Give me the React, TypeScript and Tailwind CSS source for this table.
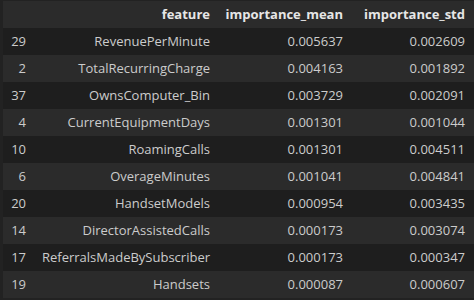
import React from 'react';

const rows: [string, string, string, string][] = [
  ['29', 'RevenuePerMinute', '0.005637', '0.002609'],
  ['2', 'TotalRecurringCharge', '0.004163', '0.001892'],
  ['37', 'OwnsComputer_Bin', '0.003729', '0.002091'],
  ['4', 'CurrentEquipmentDays', '0.001301', '0.001044'],
  ['10', 'RoamingCalls', '0.001301', '0.004511'],
  ['6', 'OverageMinutes', '0.001041', '0.004841'],
  ['20', 'HandsetModels', '0.000954', '0.003435'],
  ['14', 'DirectorAssistedCalls', '0.000173', '0.003074'],
  ['17', 'ReferralsMadeBySubscriber', '0.000173', '0.000347'],
  ['19', 'Handsets', '0.000087', '0.000607'],
];

export default function App() {
  return (
    <div className="w-[474px] h-[300px] overflow-hidden bg-[#222222] pl-[3px] pt-[1px]" style={{ fontFamily: '"Open Sans", "Noto Sans", sans-serif' }}>
      <div className="w-[471px] text-[13px] text-[#cccccc]">
        <div className="flex h-[27px] items-center bg-[#2b2b2b] font-bold text-[#e6e6e6]">
          <div className="w-[31px]"></div>
          <div className="w-[185px] text-right pr-[9px]">feature</div>
          <div className="w-[133px] text-right pr-[9px]">importance_mean</div>
          <div className="w-[122px] text-right pr-[9px]">importance_std</div>
        </div>
        {rows.map((r, i) => (
          <div key={r[0]} className={i % 2 === 0 ? 'flex h-[27px] items-center bg-[#1e1e1e]' : 'flex h-[27px] items-center bg-[#2b2b2b]'}>
            <div className="w-[31px] text-right pr-[8px]">{r[0]}</div>
            <div className="w-[185px] text-right pr-[9px] whitespace-nowrap">{r[1]}</div>
            <div className="w-[133px] text-right pr-[9px]">{r[2]}</div>
            <div className="w-[122px] text-right pr-[9px]">{r[3]}</div>
          </div>
        ))}
      </div>
    </div>
  );
}
